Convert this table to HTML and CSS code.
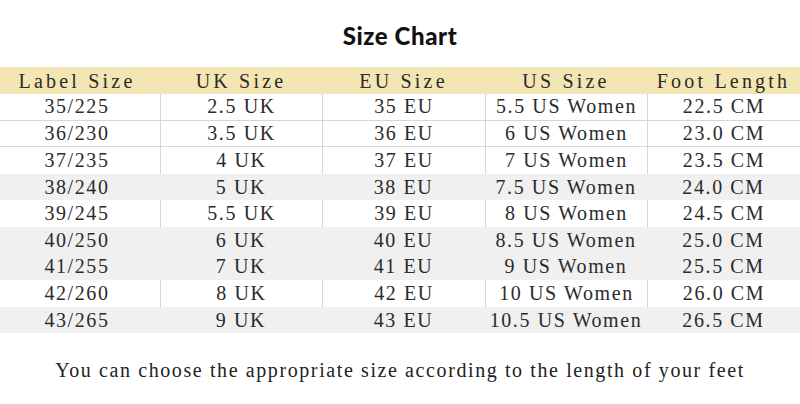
FILE: index.html
```html
<!DOCTYPE html>
<html>
<head>
<meta charset="utf-8">
<link rel="stylesheet" href="styles.css">
</head>
<body>
<div class="page">
  <h1 class="title">Size Chart</h1>
  <div class="chart">
    <div class="row head">
      <div class="cell first">Label Size</div><div class="cell">UK Size</div><div class="cell">EU Size</div><div class="cell">US Size</div><div class="cell">Foot Length</div>
    </div>
    <div class="row white ruled">
      <div class="cell first">35/225</div><div class="cell">2.5 UK</div><div class="cell">35 EU</div><div class="cell">5.5 US Women</div><div class="cell">22.5 CM</div>
    </div>
    <div class="row white ruled">
      <div class="cell first">36/230</div><div class="cell">3.5 UK</div><div class="cell">36 EU</div><div class="cell">6 US Women</div><div class="cell">23.0 CM</div>
    </div>
    <div class="row white">
      <div class="cell first">37/235</div><div class="cell">4 UK</div><div class="cell">37 EU</div><div class="cell">7 US Women</div><div class="cell">23.5 CM</div>
    </div>
    <div class="row gray">
      <div class="cell first">38/240</div><div class="cell">5 UK</div><div class="cell">38 EU</div><div class="cell">7.5 US Women</div><div class="cell">24.0 CM</div>
    </div>
    <div class="row white">
      <div class="cell first">39/245</div><div class="cell">5.5 UK</div><div class="cell">39 EU</div><div class="cell">8 US Women</div><div class="cell">24.5 CM</div>
    </div>
    <div class="row gray">
      <div class="cell first">40/250</div><div class="cell">6 UK</div><div class="cell">40 EU</div><div class="cell">8.5 US Women</div><div class="cell">25.0 CM</div>
    </div>
    <div class="row gray">
      <div class="cell first">41/255</div><div class="cell">7 UK</div><div class="cell">41 EU</div><div class="cell">9 US Women</div><div class="cell">25.5 CM</div>
    </div>
    <div class="row white">
      <div class="cell first">42/260</div><div class="cell">8 UK</div><div class="cell">42 EU</div><div class="cell">10 US Women</div><div class="cell">26.0 CM</div>
    </div>
    <div class="row gray">
      <div class="cell first">43/265</div><div class="cell">9 UK</div><div class="cell">43 EU</div><div class="cell">10.5 US Women</div><div class="cell">26.5 CM</div>
    </div>
  </div>
  <p class="note"><span class="note-text">You can choose the appropriate size according to the length of your feet</span></p>
</div>
</body>
</html>
```

FILE: styles.css
```css
html, body {
  margin: 0;
  padding: 0;
  background: #ffffff;
}

.page {
  width: 800px;
  height: 404px;
  overflow: hidden;
  display: flex;
  flex-direction: column;
}

.title {
  margin: 0;
  height: 67px;
  display: flex;
  align-items: center;
  justify-content: center;
  font-family: "Lato", "DejaVu Sans", sans-serif;
  font-weight: 900;
  font-size: 24px;
  letter-spacing: 0.6px;
  color: #111111;
  padding-left: 0;
  padding-top: 3px;
  box-sizing: border-box;
}

.chart {
  display: flex;
  flex-direction: column;
  font-family: "Liberation Serif", "DejaVu Serif", serif;
  font-size: 20px;
  letter-spacing: 1.6px;
  color: #2b2b2b;
}

.row {
  display: grid;
  grid-template-columns: 160px 162px 163px 162px 153px;
  height: 26.6px;
  box-sizing: border-box;
}

.row.head {
  background: #f3e5b4;
  height: 27px;
  color: #2d2b22;
  letter-spacing: 3.2px;
}

.row.head .cell {
  padding-top: 1px;
}

.row.white {
  background: #ffffff;
}

.row.gray {
  background: #f0f0f0;
}

.row.ruled {
  border-bottom: 1px solid #d6d6d6;
}

.cell {
  display: flex;
  align-items: center;
  justify-content: center;
  white-space: nowrap;
  box-sizing: border-box;
}

.cell.first {
  padding-right: 6px;
}

.row.white .cell + .cell {
  border-left: 1px solid #d6d6d6;
}

.note {
  margin: 0;
  padding-top: 26px;
  display: flex;
  justify-content: center;
  font-family: "Liberation Serif", "DejaVu Serif", serif;
  font-size: 20px;
  letter-spacing: 1.6px;
  color: #222222;
}

.note-text {
  display: inline-block;
  white-space: nowrap;
}
```
